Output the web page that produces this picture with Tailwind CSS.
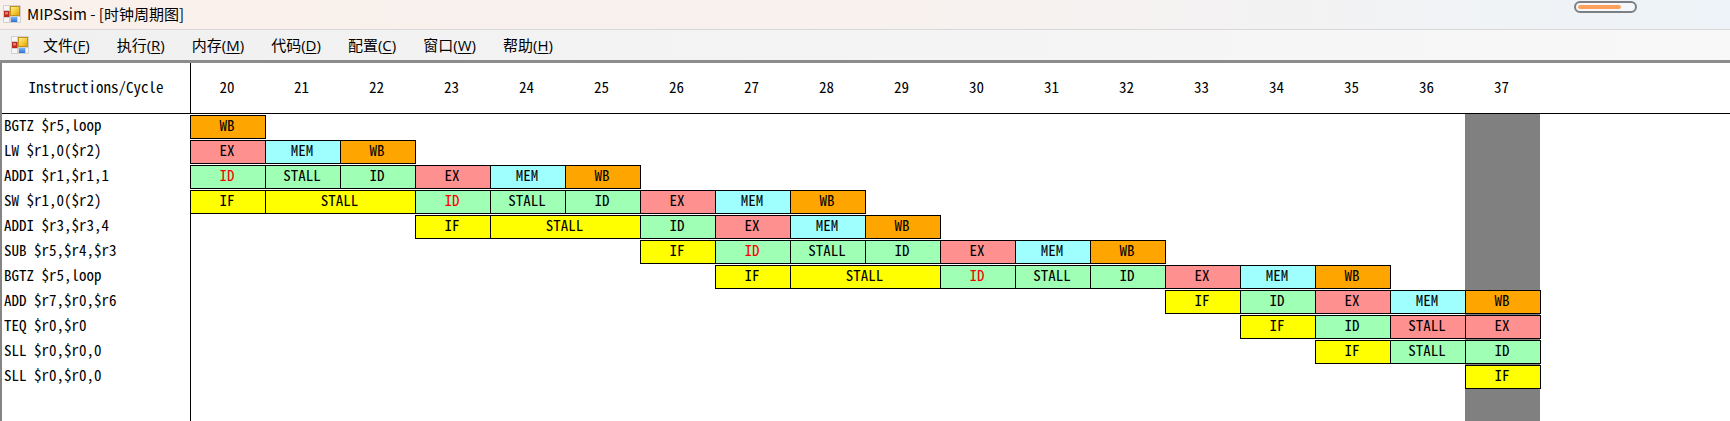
<!DOCTYPE html>
<html lang="zh-CN">
<head>
<meta charset="utf-8">
<title>MIPSsim - [时钟周期图]</title>
<script src="https://cdn.jsdelivr.net/npm/@tailwindcss/browser@4"></script>
</head>
<body class="flex h-screen flex-col overflow-hidden bg-white font-['Noto_Sans_CJK_SC',sans-serif] text-[15px] text-black">
<svg class="absolute size-0" aria-hidden="true">
  <defs>
    <linearGradient id="gold" x1="0" y1="0" x2="1" y2="1"><stop offset="0" stop-color="#fff0a0"/><stop offset=".6" stop-color="#f5c62c"/><stop offset="1" stop-color="#d99a10"/></linearGradient>
    <linearGradient id="blue" x1="0" y1="0" x2="0" y2="1"><stop offset="0" stop-color="#79b4f8"/><stop offset="1" stop-color="#2f6fd8"/></linearGradient>
  </defs>
  <symbol id="form" viewBox="0 0 18 18">
    <rect width="18" height="18" rx="1" fill="#d0d0d0"/>
    <rect x="1" y="1" width="5" height="4" fill="#f6f6f6"/>
    <rect x="1" y="13" width="5" height="4" fill="#f6f6f6"/>
    <rect x="15" y="12" width="2" height="5" fill="#f6f6f6"/>
    <rect x="1" y="6" width="5.500" height="6" fill="#b92a20"/>
    <rect x="2" y="7" width="3" height="2.500" fill="#e47a70"/>
    <rect x="7.500" y="1.500" width="9" height="9" fill="url(#gold)" stroke="#c39318"/>
    <rect x="8" y="12" width="6" height="5" fill="url(#blue)"/>
  </symbol>
</svg>

<header class="relative flex h-[29px] shrink-0 items-center gap-[6px] bg-linear-to-r from-[#faf0eb] via-[#f8f1ee] to-[#edf3f8] pb-px pl-[3px]">
  <svg class="size-[18px]"><use href="#form"/></svg>
  <h1 class="leading-[18px]">MIPSsim - [时钟周期图]</h1>
  <div class="absolute top-[1px] right-[93px] h-[12px] w-[63px] rounded-full border-2 border-[#7d8083] bg-[#f5f7fa] p-[2px]"><div class="h-full w-[43px] rounded-full bg-[#ffa05c]"></div></div>
</header>

<nav class="flex h-[34px] shrink-0 items-center border-t border-b-3 border-t-[#d8d8d8] border-b-[#8c8c8c] bg-linear-to-r from-[#f0f0f0] to-[#f8f8f8] pb-px pl-[11px]">
  <svg class="mr-[14px] size-[18px]"><use href="#form"/></svg>
  <div class="flex gap-[27px] font-['Open_Sans','Noto_Sans_CJK_SC',sans-serif] leading-[20px]">
    <button>文件(<u class="underline-offset-2">F</u>)</button>
    <button>执行(<u class="underline-offset-2">R</u>)</button>
    <button>内存(<u class="underline-offset-2">M</u>)</button>
    <button>代码(<u class="underline-offset-2">D</u>)</button>
    <button>配置(<u class="underline-offset-2">C</u>)</button>
    <button>窗口(<u class="underline-offset-2">W</u>)</button>
    <button>帮助(<u class="underline-offset-2">H</u>)</button>
  </div>
</nav>

<main class="min-h-0 grow overflow-hidden border-l-2 border-[#858585] font-['Noto_Sans_CJK_SC',monospace] [font-feature-settings:'hwid']">
  <table class="h-full w-full table-fixed border-separate border-spacing-0">
    <colgroup id="cols"><col class="w-[188px]"></colgroup>
    <thead><tr id="head" class="h-[51px]"><th class="border-b border-black p-0 pb-[2px] font-normal">Instructions/Cycle</th></tr></thead>
    <tbody id="body"></tbody>
  </table>
</main>

<script>
const first = 20, last = 37;
// Each stage is label[*][/colour][:span]; * marks the stage drawn in red text.
const rows = [
  ['BGTZ $r5,loop', 20, 'WB'],
  ['LW $r1,0($r2)', 20, 'EX MEM WB'],
  ['ADDI $r1,$r1,1', 20, 'ID* STALL/ID ID EX MEM WB'],
  ['SW $r1,0($r2)', 20, 'IF STALL/IF:2 ID* STALL/ID ID EX MEM WB'],
  ['ADDI $r3,$r3,4', 23, 'IF STALL/IF:2 ID EX MEM WB'],
  ['SUB $r5,$r4,$r3', 26, 'IF ID* STALL/ID ID EX MEM WB'],
  ['BGTZ $r5,loop', 27, 'IF STALL/IF:2 ID* STALL/ID ID EX MEM WB'],
  ['ADD $r7,$r0,$r6', 33, 'IF ID EX MEM WB'],
  ['TEQ $r0,$r0', 34, 'IF ID STALL/EX EX'],
  ['SLL $r0,$r0,0', 35, 'IF STALL/ID ID'],
  ['SLL $r0,$r0,0', 37, 'IF'],
];
const fill = { IF: 'bg-[#ffff00]', ID: 'bg-[#9fffb4]', EX: 'bg-[#ff9090]', MEM: 'bg-[#9fffff]', WB: 'bg-[#ffa500]' };
const cols = document.getElementById('cols'), head = document.getElementById('head'), body = document.getElementById('body');
for (let c = first; c <= last; c++) {
  cols.insertAdjacentHTML('beforeend', '<col class="w-[75px]">');
  head.insertAdjacentHTML('beforeend', `<th class="border-b border-black p-0 pr-[2px] pb-[2px] font-normal ${c === first ? 'border-l' : ''}">${c}</th>`);
}
cols.insertAdjacentHTML('beforeend', '<col>');
head.insertAdjacentHTML('beforeend', '<td class="border-b border-black p-0"></td>');

const blank = c => `<td class="p-0 ${c === first ? 'border-l border-black' : ''} ${c === last ? 'bg-[#808080]' : ''}"></td>`;
for (const [name, start, stages] of rows) {
  let html = `<th class="p-0 pb-[4px] pl-[2px] text-left font-normal">${name}</th>`;
  let c = first;
  while (c < start) html += blank(c++);
  for (const token of stages.split(' ')) {
    const [label, span = 1] = token.split(':');
    const [text, kind = text.replace('*', '')] = label.split('/');
    const red = text.endsWith('*');
    html += `<td colspan="${span}" class="p-0 ${c === last ? 'bg-[#808080]' : ''}"><div class="relative mt-px -mr-px h-[24px] border border-black pr-[2px] text-center leading-[18px] ${fill[kind]} ${red ? 'text-[#ff0000]' : ''}">${text.replace('*', '')}</div></td>`;
    c += +span;
  }
  while (c <= last) html += blank(c++);
  body.insertAdjacentHTML('beforeend', `<tr class="h-[25px] leading-[20px]">${html}<td class="p-0"></td></tr>`);
}
let rest = '<td class="p-0"></td>';
for (let c = first; c <= last; c++) rest += blank(c);
body.insertAdjacentHTML('beforeend', `<tr>${rest}<td class="p-0"></td></tr>`);
</script>
</body>
</html>
